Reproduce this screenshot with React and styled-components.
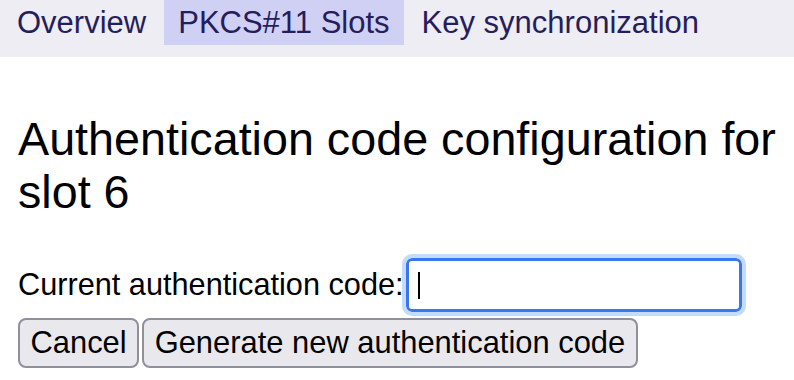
import React from "react";
import styled, { createGlobalStyle } from "styled-components";

const Global = createGlobalStyle`
  html, body { margin: 0; padding: 0; background: #ffffff; }
  body { font-family: "Liberation Sans", Arial, sans-serif; color: #000; }
`;

const Nav = styled.nav`
  display: flex;
  gap: 4px;
  padding: 0 0 12px 3px;
  background: #ededf3;
`;

const Tab = styled.a`
  display: block;
  padding: 0 14px;
  height: 45px;
  line-height: 45px;
  font-size: 31px;
  color: #261d5c;
  text-decoration: none;
  background: ${(p) => (p.$active ? "#d0d0f5" : "transparent")};
`;

const Main = styled.main`
  padding: 56px 18px 0 18px;
`;

const Title = styled.h1`
  margin: 0;
  font-size: 46.7px;
  font-weight: normal;
  line-height: 53px;
`;

const Form = styled.form`
  display: flex;
  flex-direction: column;
  align-items: flex-start;
  gap: 6px;
  margin-top: 39px;
`;

const Row = styled.div`
  display: flex;
  align-items: center;
  gap: 2px;
`;

const Label = styled.label`
  font-size: 30.7px;
`;

const Field = styled.span`
  position: relative;
  display: block;
`;

const Input = styled.input`
  display: block;
  box-sizing: border-box;
  width: 336px;
  height: 54px;
  border: 3px solid #3a76f0;
  border-radius: 6px;
  outline: 4px solid #c4dcfb;
  outline-offset: 0;
  padding: 0 12px;
  font-size: 30px;
  font-family: inherit;
  background: #fff;
  caret-color: transparent;
`;

const Caret = styled.span`
  position: absolute;
  left: 12px;
  top: 14px;
  width: 2px;
  height: 27px;
  background: #000;
  pointer-events: none;
`;

const Buttons = styled.div`
  display: flex;
  gap: 3px;
`;

const Button = styled.button`
  box-sizing: border-box;
  height: 50px;
  padding: 0 10.5px;
  font-family: "Liberation Sans", Arial, sans-serif;
  font-size: 30.9px;
  color: #000;
  background: #e9e9ed;
  border: 2px solid #8f8f9d;
  border-radius: 8px;
`;

export default function App() {
  const inputRef = React.useRef(null);
  React.useEffect(() => {
    inputRef.current && inputRef.current.focus();
  }, []);
  return (
    <>
      <Global />
      <Nav>
        <Tab href="#">Overview</Tab>
        <Tab href="#" $active>PKCS#11 Slots</Tab>
        <Tab href="#">Key synchronization</Tab>
      </Nav>
      <Main>
        <Title>Authentication code configuration for slot 6</Title>
        <Form onSubmit={(e) => e.preventDefault()}>
          <Row>
            <Label htmlFor="code">Current authentication code:</Label>
            <Field>
              <Input id="code" ref={inputRef} type="password" />
              <Caret />
            </Field>
          </Row>
          <Buttons>
            <Button type="button">Cancel</Button>
            <Button type="submit">Generate new authentication code</Button>
          </Buttons>
        </Form>
      </Main>
    </>
  );
}
